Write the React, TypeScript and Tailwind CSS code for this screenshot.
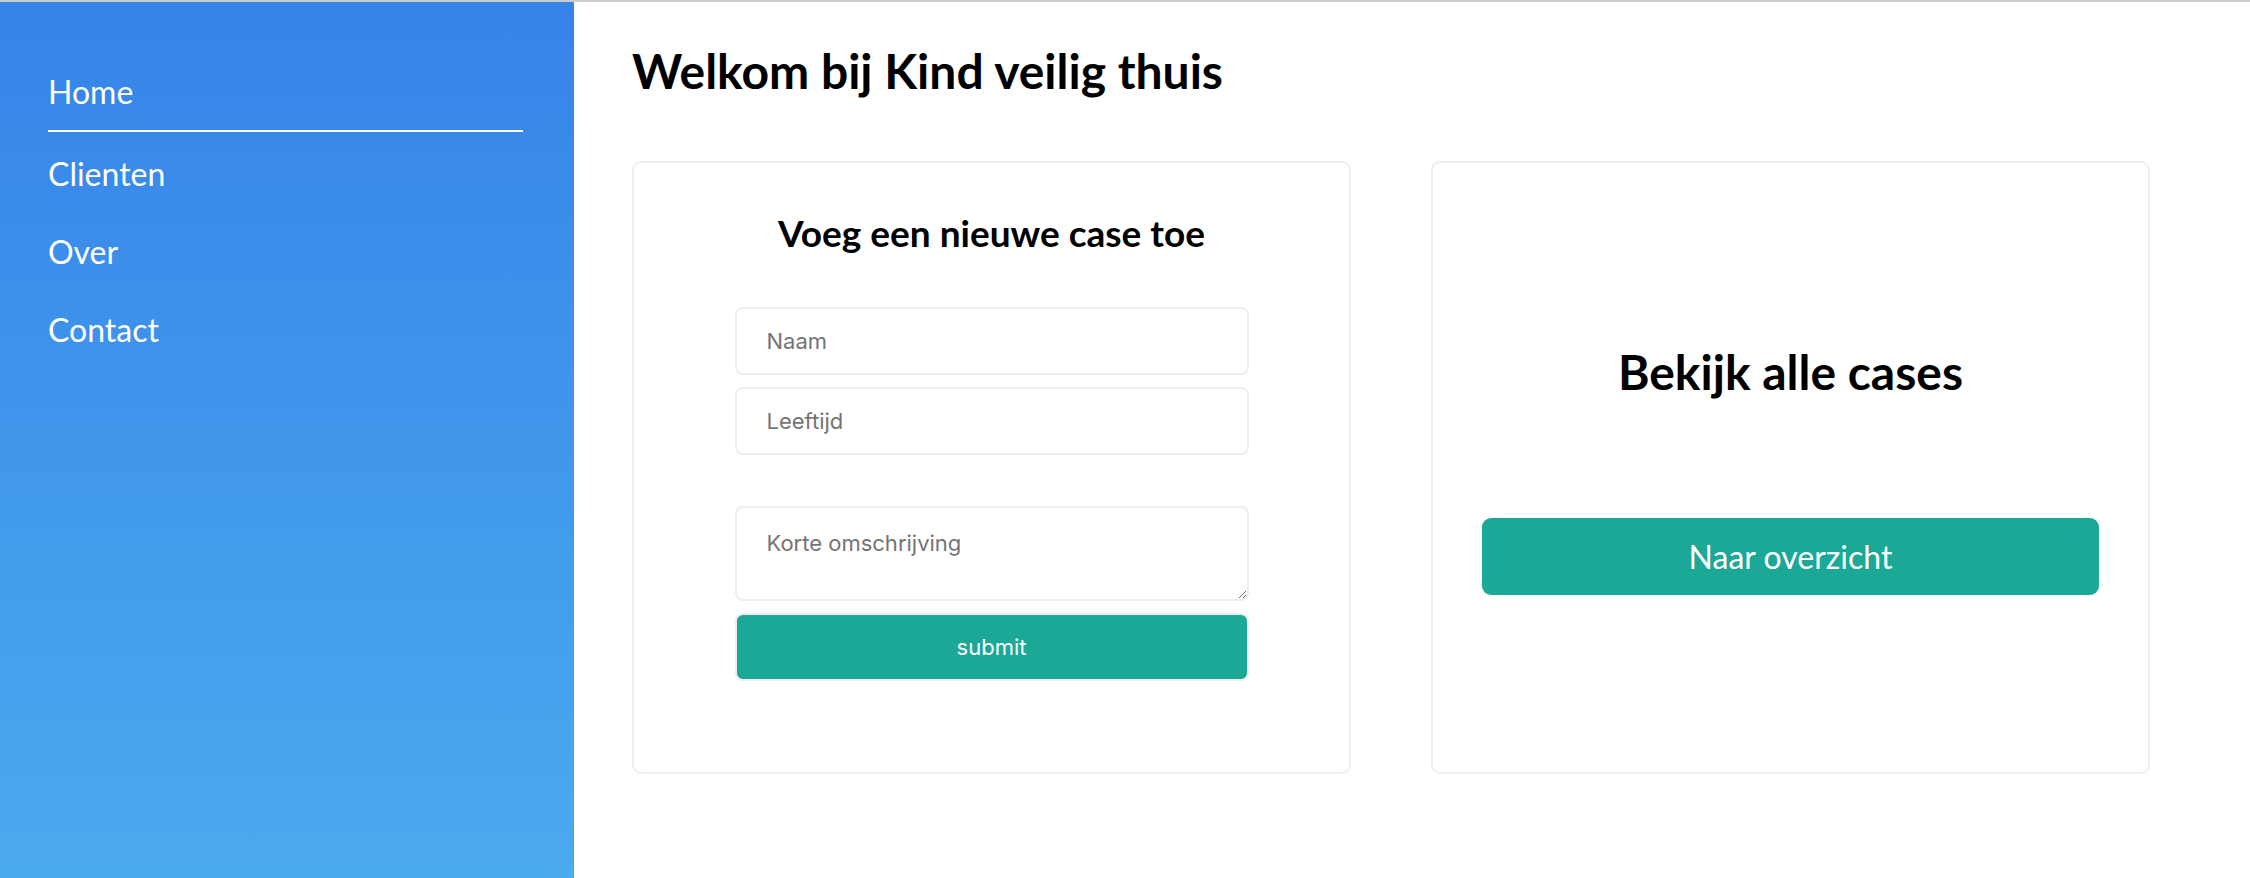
import React from 'react';

const navItems = ['Clienten', 'Over', 'Contact'];

const Sidebar = () => {
  return (
    <aside className="w-[574px] shrink-0 bg-linear-to-b from-[#3683e8] to-[#4caaee] pl-[48px] pr-[51px] pt-[72px] text-white">
      <nav className="flex flex-col">
        <a className="block text-[32px] leading-[36px]">Home</a>
        <div className="mt-[20px] h-[2px] bg-white" />
        {navItems.map((item, index) => (
          <a key={item} className={`block text-[32px] leading-[36px] ${index === 0 ? 'mt-[24px]' : 'mt-[42px]'}`}>
            {item}
          </a>
        ))}
      </nav>
    </aside>
  );
};

const inputClass =
  'w-[514px] rounded-[8px] border-2 border-[#eeeeee] bg-white px-[30px] text-[22px] text-[#333] outline-none placeholder:text-[#747474] font-["Inter",sans-serif]';

const NewCaseCard = () => {
  return (
    <div className="flex h-[613px] w-[719px] flex-col items-center rounded-[9px] border-2 border-[#eeeeee] pt-[48px]">
      <h2 className="text-[37px] font-bold leading-[44px]">Voeg een nieuwe case toe</h2>
      <form className="mt-[52px] flex flex-col" onSubmit={(e) => e.preventDefault()}>
        <input className={`${inputClass} h-[68px]`} placeholder="Naam" />
        <input className={`${inputClass} mt-[12px] h-[68px]`} placeholder="Leeftijd" />
        <textarea className={`${inputClass} mt-[51px] h-[95px] pt-[22px] leading-[1.2]`} placeholder="Korte omschrijving" />
        <button
          type="submit"
          className='mt-[12px] h-[68px] w-[514px] rounded-[8px] border-2 border-[#eeeeee] bg-[#1ba896] text-[22px] text-white font-["Inter",sans-serif]'
        >
          submit
        </button>
      </form>
    </div>
  );
};

const OverviewCard = () => {
  return (
    <div className="flex h-[613px] w-[719px] flex-col items-center rounded-[9px] border-2 border-[#eeeeee] px-[49px] pt-[180px]">
      <h2 className="text-[48px] font-bold leading-[58px]">Bekijk alle cases</h2>
      <button className="mt-[117px] h-[77px] w-full rounded-[9px] bg-[#1ba896] text-[32px] text-white">
        Naar overzicht
      </button>
    </div>
  );
};

const App = () => {
  return (
    <div className="flex h-[878px] border-t-2 border-[#cccccc] bg-white font-['Lato',sans-serif] text-black">
      <Sidebar />
      <main className="flex-1 pl-[58px] pt-[40px]">
        <h1 className="text-[48px] font-bold leading-[58px]">Welkom bij Kind veilig thuis</h1>
        <div className="mt-[61px] flex gap-[80px]">
          <NewCaseCard />
          <OverviewCard />
        </div>
      </main>
    </div>
  );
};

export default App;
